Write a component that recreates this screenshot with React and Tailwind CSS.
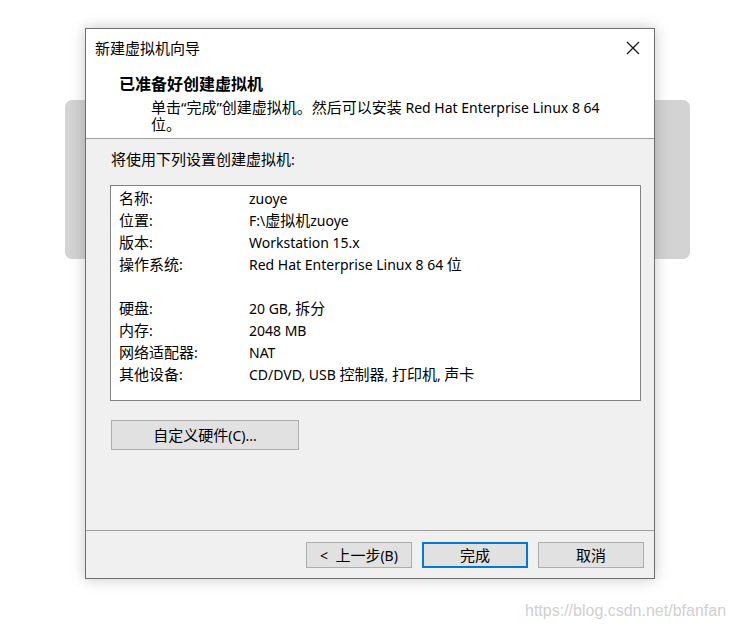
const rows = [
	['名称:', 'zuoye'],
	['位置:', 'F:\\虚拟机zuoye'],
	['版本:', 'Workstation 15.x'],
	['操作系统:', 'Red Hat Enterprise Linux 8 64 位'],
	null,
	['硬盘:', '20 GB, 拆分'],
	['内存:', '2048 MB'],
	['网络适配器:', 'NAT'],
	['其他设备:', 'CD/DVD, USB 控制器, 打印机, 声卡'],
];

const font = { fontFamily: '"Noto Sans", "Noto Sans CJK SC", sans-serif' };

// CJK glyphs in the original are a touch larger than the latin ones
const T = ({ children }) => {
	const parts = String(children).split(/([\u3000-\u303f\u4e00-\u9fff\uff00-\uffef“”]+)/);
	return (
		<span className="whitespace-pre">
			{parts.map((p, i) =>
				i % 2 ? (
					<span key={i} className="text-[15px]">
						{p}
					</span>
				) : (
					p
				)
			)}
		</span>
	);
};

const App = () => {
	return (
		<div className="relative w-[734px] h-[630px] bg-white overflow-hidden text-black text-[14px]" style={font}>
			{/* window behind the dialog */}
			<div className="pt-[100px] pl-[65px]">
				<div className="w-[625px] h-[159px] rounded-[7px] bg-[#d3d3d3]" />
			</div>

			<div className="absolute left-[85px] top-[28px] w-[570px] h-[551px] border border-[#6f6f6f] bg-[#f0f0f0] flex flex-col shadow-[0_0_14px_rgba(0,0,0,0.22)]">
				<div className="bg-white h-[109px] overflow-hidden">
					<div className="h-[38px] flex items-center justify-between pl-[9px] pr-[14px]">
						<span className="text-[15px] leading-[20px]">新建虚拟机向导</span>
						<svg width="14" height="14" viewBox="0 0 14 14" className="text-[#111]">
							<path d="M1 1 L13 13 M13 1 L1 13" stroke="currentColor" strokeWidth="1.2" fill="none" />
						</svg>
					</div>
					<div className="mt-[7px] h-[20px] pl-[33px] text-[16px] leading-[20px] font-bold">已准备好创建虚拟机</div>
					<div className="pt-[5px] pl-[65px] leading-[17px]">
						<div className="h-[17px] flex items-center">
							<T>单击“完成”创建虚拟机。然后可以安装 Red Hat Enterprise Linux 8 64</T>
						</div>
						<div className="h-[17px] flex items-center">
							<T>位。</T>
						</div>
					</div>
				</div>
				<div className="h-px bg-[#a0a0a0]" />

				<div className="flex-1 px-[24px] pt-[10px]">
					<div className="h-[20px] pl-px flex items-center">
						<T>将使用下列设置创建虚拟机:</T>
					</div>
					<div className="mt-[16px] w-[531px] h-[216px] border border-[#828282] bg-white pt-px pl-[8px]">
						{rows.map((r, i) =>
							r ? (
								<div key={i} className="flex h-[22px] items-center">
									<span className="w-[130px]">
										<T>{r[0]}</T>
									</span>
									<T>{r[1]}</T>
								</div>
							) : (
								<div key={i} className="h-[22px]" />
							)
						)}
					</div>
					<button className="mt-[19px] ml-px w-[188px] h-[30px] border border-[#adadad] bg-[#e1e1e1] flex items-center justify-center">
						<T>自定义硬件(C)...</T>
					</button>
				</div>

				<div className="h-px bg-[#a0a0a0]" />
				<div className="h-[47px] flex justify-end items-start gap-[10px] pt-[11px] pr-[10px]">
					<button className="w-[106px] h-[26px] border border-[#adadad] bg-[#e1e1e1] flex items-center justify-center">
						<T>{'<  上一步(B)'}</T>
					</button>
					<button className="w-[106px] h-[26px] border-2 border-[#0078d7] bg-[#e1e1e1] flex items-center justify-center">
						<T>完成</T>
					</button>
					<button className="w-[106px] h-[26px] border border-[#adadad] bg-[#e1e1e1] flex items-center justify-center">
						<T>取消</T>
					</button>
				</div>
			</div>

			<div
				className="absolute left-[525px] top-[601px] text-[16px] leading-[20px] text-[#d0d0d0]"
				style={{ fontFamily: '"Liberation Sans", Arial, sans-serif' }}>
				https://blog.csdn.net/bfanfan
			</div>
		</div>
	);
};

export default App;
